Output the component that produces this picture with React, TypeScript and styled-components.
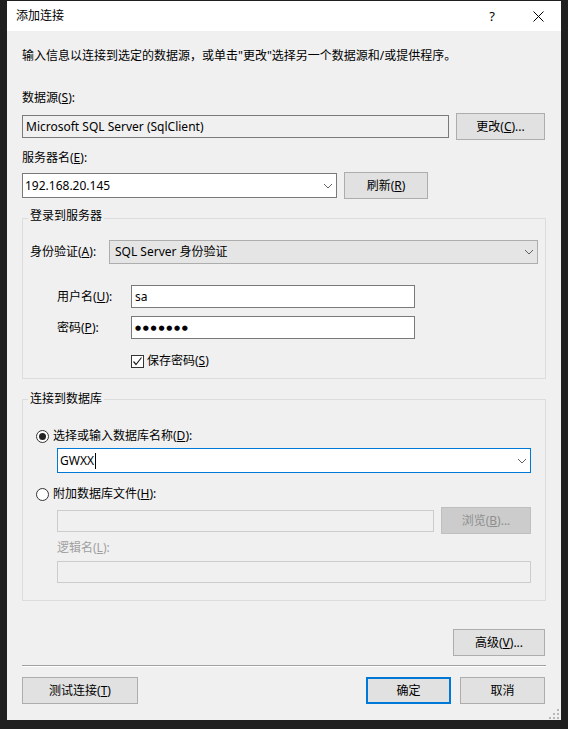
import styled, { createGlobalStyle } from 'styled-components';

const GlobalStyle = createGlobalStyle`
  html, body {
    margin: 0;
    padding: 0;
    background: #1f1f1f;
  }
  body {
    font-family: "Noto Sans", "Noto Sans CJK SC", sans-serif;
    font-size: 12px;
    color: #000;
  }
`;

const Chevron = () => (
  <svg width="10" height="6" viewBox="0 0 10 6">
    <path d="M1 1 L5 5 L9 1" fill="none" stroke="#606060" strokeWidth="1" />
  </svg>
);

const CloseGlyph = () => (
  <svg width="11" height="11" viewBox="0 0 11 11">
    <path d="M0.5 0.5 L10.5 10.5 M10.5 0.5 L0.5 10.5" stroke="#000" strokeWidth="1" />
  </svg>
);

const CheckGlyph = () => (
  <svg width="11" height="11" viewBox="0 0 11 11">
    <path d="M1.5 5.5 L4 8.5 L9.5 1.5" fill="none" stroke="#222" strokeWidth="1.2" />
  </svg>
);

const Grip = () => (
  <svg width="10" height="10" viewBox="0 0 10 10">
    {[
      [8, 0],
      [8, 4],
      [4, 4],
      [8, 8],
      [4, 8],
      [0, 8],
    ].map(([x, y]) => (
      <rect key={`${x}-${y}`} x={x} y={y} width="2" height="2" fill="#b8b8b8" />
    ))}
  </svg>
);

export default function App() {
  return (
    <>
      <GlobalStyle />
      <Window>
        <TitleBar>
          <TitleText>添加连接</TitleText>
          <TitleButton>?</TitleButton>
          <TitleButton>
            <CloseGlyph />
          </TitleButton>
        </TitleBar>

        <Body>
          <Text>输入信息以连接到选定的数据源，或单击"更改"选择另一个数据源和/或提供程序。</Text>

          <Text $top={26}>
            数据源(<u>S</u>):
          </Text>
          <Row $top={7}>
            <TextBox $w={427} $bg="#f0f0f0">
              Microsoft SQL Server (SqlClient)
            </TextBox>
            <Button $w={89}>
              更改(<u>C</u>)...
            </Button>
          </Row>

          <Text $top={10}>
            服务器名(<u>E</u>):
          </Text>
          <Row $top={6}>
            <Combo $w={315}>
              <ComboText>192.168.20.145</ComboText>
              <ComboArrow>
                <Chevron />
              </ComboArrow>
            </Combo>
            <Button $w={84}>
              刷新(<u>R</u>)
            </Button>
          </Row>

          <Group $top={19} $padTop={21} $padBottom={9}>
            <GroupTitle $top={-11}>登录到服务器</GroupTitle>
            <FieldRow $indent={7} $right={7}>
              <FieldLabel $w={79}>
                身份验证(<u>A</u>):
              </FieldLabel>
              <DropList>
                <ComboText $pad={5}>SQL Server 身份验证</ComboText>
                <ComboArrow>
                  <Chevron />
                </ComboArrow>
              </DropList>
            </FieldRow>
            <FieldRow $indent={34} $top={21}>
              <FieldLabel $w={74}>
                用户名(<u>U</u>):
              </FieldLabel>
              <TextBox $w={284}>sa</TextBox>
            </FieldRow>
            <FieldRow $indent={34} $top={8}>
              <FieldLabel $w={74}>
                密码(<u>P</u>):
              </FieldLabel>
              <TextBox $w={284}>
                <Dots>●●●●●●●</Dots>
              </TextBox>
            </FieldRow>
            <ChoiceRow $indent={108} $top={14}>
              <CheckBox>
                <CheckGlyph />
              </CheckBox>
              <span>
                保存密码(<u>S</u>)
              </span>
            </ChoiceRow>
          </Group>

          <Group $top={20} $padTop={28} $padBottom={17}>
            <GroupTitle $top={-9}>连接到数据库</GroupTitle>
            <ChoiceRow $indent={13}>
              <Radio $checked />
              <span>
                选择或输入数据库名称(<u>D</u>):
              </span>
            </ChoiceRow>
            <Indented $top={4}>
              <Combo $focused>
                <ComboText>
                  GWXX
                  <Caret />
                </ComboText>
                <ComboArrow>
                  <Chevron />
                </ComboArrow>
              </Combo>
            </Indented>
            <ChoiceRow $indent={13} $top={13}>
              <Radio />
              <span>
                附加数据库文件(<u>H</u>):
              </span>
            </ChoiceRow>
            <Indented $top={5}>
              <Row>
                <TextBox $w={377} $h={22} $disabled />
                <Button $w={90} $disabled>
                  浏览(<u>B</u>)...
                </Button>
              </Row>
            </Indented>
            <Indented $top={6}>
              <Text $muted>
                逻辑名(<u>L</u>):
              </Text>
            </Indented>
            <Indented $top={5}>
              <TextBox $h={22} $disabled />
            </Indented>
          </Group>

          <Actions $top={28}>
            <Button $w={92}>
              高级(<u>V</u>)...
            </Button>
          </Actions>

          <Separator />

          <Footer>
            <Button $w={116}>
              测试连接(<u>T</u>)
            </Button>
            <FooterRight>
              <Button $w={85} $primary>
                确定
              </Button>
              <Button $w={85}>取消</Button>
            </FooterRight>
          </Footer>
        </Body>

        <GripCorner>
          <Grip />
        </GripCorner>
      </Window>
    </>
  );
}

const Window = styled.div`
  position: relative;
  box-sizing: border-box;
  margin: 1px 0 0 7px;
  width: 554px;
  height: 719px;
  background: #f0f0f0;
  display: flex;
  flex-direction: column;
`;

const TitleBar = styled.div`
  height: 30px;
  background: #fff;
  display: flex;
  align-items: center;
  flex-shrink: 0;
`;

const TitleText = styled.div`
  flex: 1;
  padding-left: 9px;
  line-height: 16px;
`;

const TitleButton = styled.div`
  width: 46px;
  height: 30px;
  display: flex;
  align-items: center;
  justify-content: center;
  font-size: 13px;
`;

const Body = styled.div`
  padding: 17px 15px 0 15px;
  display: flex;
  flex-direction: column;
`;

const Text = styled.div<{ $top?: number; $muted?: boolean }>`
  margin-top: ${(p) => p.$top ?? 0}px;
  line-height: 16px;
  white-space: nowrap;
  color: ${(p) => (p.$muted ? '#a0a0a0' : '#000')};
`;

const Row = styled.div<{ $top?: number }>`
  display: flex;
  align-items: center;
  gap: 7px;
  margin-top: ${(p) => p.$top ?? 0}px;
`;

const TextBox = styled.div<{ $w?: number; $h?: number; $bg?: string; $disabled?: boolean }>`
  box-sizing: border-box;
  width: ${(p) => (p.$w ? `${p.$w}px` : '100%')};
  height: ${(p) => p.$h ?? 23}px;
  padding-left: 3px;
  display: flex;
  align-items: center;
  border: 1px solid ${(p) => (p.$disabled ? '#cccccc' : '#7a7a7a')};
  background: ${(p) => (p.$disabled ? '#f0f0f0' : p.$bg ?? '#fff')};
  white-space: nowrap;
  line-height: 16px;
`;

const Dots = styled.span`
  font-family: "DejaVu Sans", sans-serif;
  font-size: 7px;
  letter-spacing: 1.7px;
`;

const Combo = styled.div<{ $w?: number; $focused?: boolean }>`
  box-sizing: border-box;
  width: ${(p) => (p.$w ? `${p.$w}px` : '100%')};
  height: 25px;
  display: flex;
  align-items: center;
  border: 1px solid ${(p) => (p.$focused ? '#0078d7' : '#7a7a7a')};
  background: #fff;
`;

const DropList = styled.div`
  box-sizing: border-box;
  flex: 1;
  height: 24px;
  display: flex;
  align-items: center;
  border: 1px solid #adadad;
  background: #e5e5e5;
`;

const ComboText = styled.div<{ $pad?: number }>`
  flex: 1;
  padding-left: ${(p) => p.$pad ?? 2}px;
  line-height: 16px;
  white-space: nowrap;
  display: flex;
  align-items: center;
`;

const Caret = styled.span`
  display: inline-block;
  width: 1px;
  height: 16px;
  margin-left: 1px;
  background: #000;
`;

const ComboArrow = styled.div`
  width: 17px;
  display: flex;
  align-items: center;
  justify-content: center;
`;

const Button = styled.button<{ $w: number; $primary?: boolean; $disabled?: boolean }>`
  box-sizing: border-box;
  width: ${(p) => p.$w}px;
  height: 27px;
  padding: 0;
  font: inherit;
  line-height: 16px;
  color: ${(p) => (p.$disabled ? '#8f8f8f' : '#000')};
  background: ${(p) => (p.$disabled ? '#cccccc' : '#e1e1e1')};
  border: ${(p) =>
    p.$primary ? '2px solid #0078d7' : `1px solid ${p.$disabled ? '#bfbfbf' : '#adadad'}`};
  white-space: nowrap;
`;

const Group = styled.div<{ $top: number; $padTop: number; $padBottom: number }>`
  position: relative;
  margin-top: ${(p) => p.$top}px;
  padding: ${(p) => p.$padTop}px 0 ${(p) => p.$padBottom}px 0;
  border: 1px solid #dcdcdc;
  display: flex;
  flex-direction: column;
`;

const GroupTitle = styled.div<{ $top: number }>`
  position: absolute;
  top: ${(p) => p.$top}px;
  left: 5px;
  padding: 0 2px;
  line-height: 16px;
  background: #f0f0f0;
`;

const FieldRow = styled.div<{ $indent: number; $right?: number; $top?: number }>`
  display: flex;
  align-items: center;
  margin: ${(p) => p.$top ?? 0}px ${(p) => p.$right ?? 0}px 0 ${(p) => p.$indent}px;
`;

const FieldLabel = styled.div<{ $w: number }>`
  width: ${(p) => p.$w}px;
  flex-shrink: 0;
  line-height: 16px;
  white-space: nowrap;
`;

const ChoiceRow = styled.div<{ $indent: number; $top?: number }>`
  display: flex;
  align-items: center;
  gap: 3px;
  height: 16px;
  margin: ${(p) => p.$top ?? 0}px 0 0 ${(p) => p.$indent}px;
  line-height: 16px;
  white-space: nowrap;
`;

const CheckBox = styled.div`
  box-sizing: border-box;
  width: 13px;
  height: 13px;
  border: 1px solid #333;
  background: #fff;
  display: flex;
  align-items: center;
  justify-content: center;
`;

const Radio = styled.div<{ $checked?: boolean }>`
  box-sizing: border-box;
  width: 13px;
  height: 13px;
  border-radius: 50%;
  border: 1px solid #333;
  background: #fff;
  display: flex;
  align-items: center;
  justify-content: center;
  margin-right: 1px;

  &::after {
    content: '';
    display: ${(p) => (p.$checked ? 'block' : 'none')};
    width: 7px;
    height: 7px;
    border-radius: 50%;
    background: #222;
  }
`;

const Indented = styled.div<{ $top?: number }>`
  margin: ${(p) => p.$top ?? 0}px 14px 0 34px;
`;

const Actions = styled.div<{ $top: number }>`
  display: flex;
  justify-content: flex-end;
  margin-top: ${(p) => p.$top}px;
  padding-right: 1px;
`;

const Separator = styled.div`
  margin-top: 9px;
  height: 0;
  border-top: 1px solid #a0a0a0;
  border-bottom: 1px solid #fff;
`;

const Footer = styled.div`
  display: flex;
  justify-content: space-between;
  margin-top: 10px;
  padding-right: 1px;
`;

const FooterRight = styled.div`
  display: flex;
  gap: 9px;
`;

const GripCorner = styled.div`
  position: absolute;
  right: 2px;
  bottom: 1px;
  display: flex;
`;
